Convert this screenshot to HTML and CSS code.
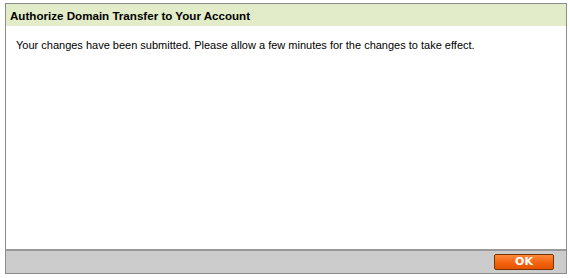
FILE: index.html
```html
<!DOCTYPE html>
<html>
<head>
<meta charset="utf-8">
<link rel="stylesheet" href="styles.css">
</head>
<body>
<div class="dialog">
  <div class="header">Authorize Domain Transfer to Your Account</div>
  <div class="content">Your changes have been submitted. Please allow a few minutes for the changes to take effect.</div>
  <div class="footer"><button class="ok">OK</button></div>
</div>
</body>
</html>
```

FILE: styles.css
```css
html, body {
  margin: 0;
  padding: 0;
  background: #ffffff;
}
body {
  padding: 3px 3px 0 5px;
  font-family: "Liberation Sans", Arial, sans-serif;
}
.dialog {
  width: 562px;
  height: 271px;
  border: 1px solid #8c8c8c;
  display: flex;
  flex-direction: column;
  box-sizing: border-box;
}
.header {
  background: #e3ecc8;
  height: 22px;
  line-height: 23px;
  padding-left: 4px;
  font-weight: bold;
  font-size: 11.6px;
  color: #000;
}
.content {
  flex: 1;
  padding: 13px 0 0 10px;
  font-size: 11px;
  color: #000;
}
.footer {
  background: #cccccc;
  border-top: 2px solid #999999;
  height: 22px;
  display: flex;
  align-items: center;
  justify-content: flex-end;
  padding-right: 12px;
}
.ok {
  width: 60px;
  height: 16px;
  padding: 0;
  border: 1px solid #7a3300;
  border-radius: 2px;
  background: linear-gradient(#ff8a3d, #f2600c 60%, #e45500);
  color: #fff;
  font-family: "DejaVu Sans", Verdana, sans-serif;
  font-weight: bold;
  font-size: 11px;
  line-height: 14px;
}
```
